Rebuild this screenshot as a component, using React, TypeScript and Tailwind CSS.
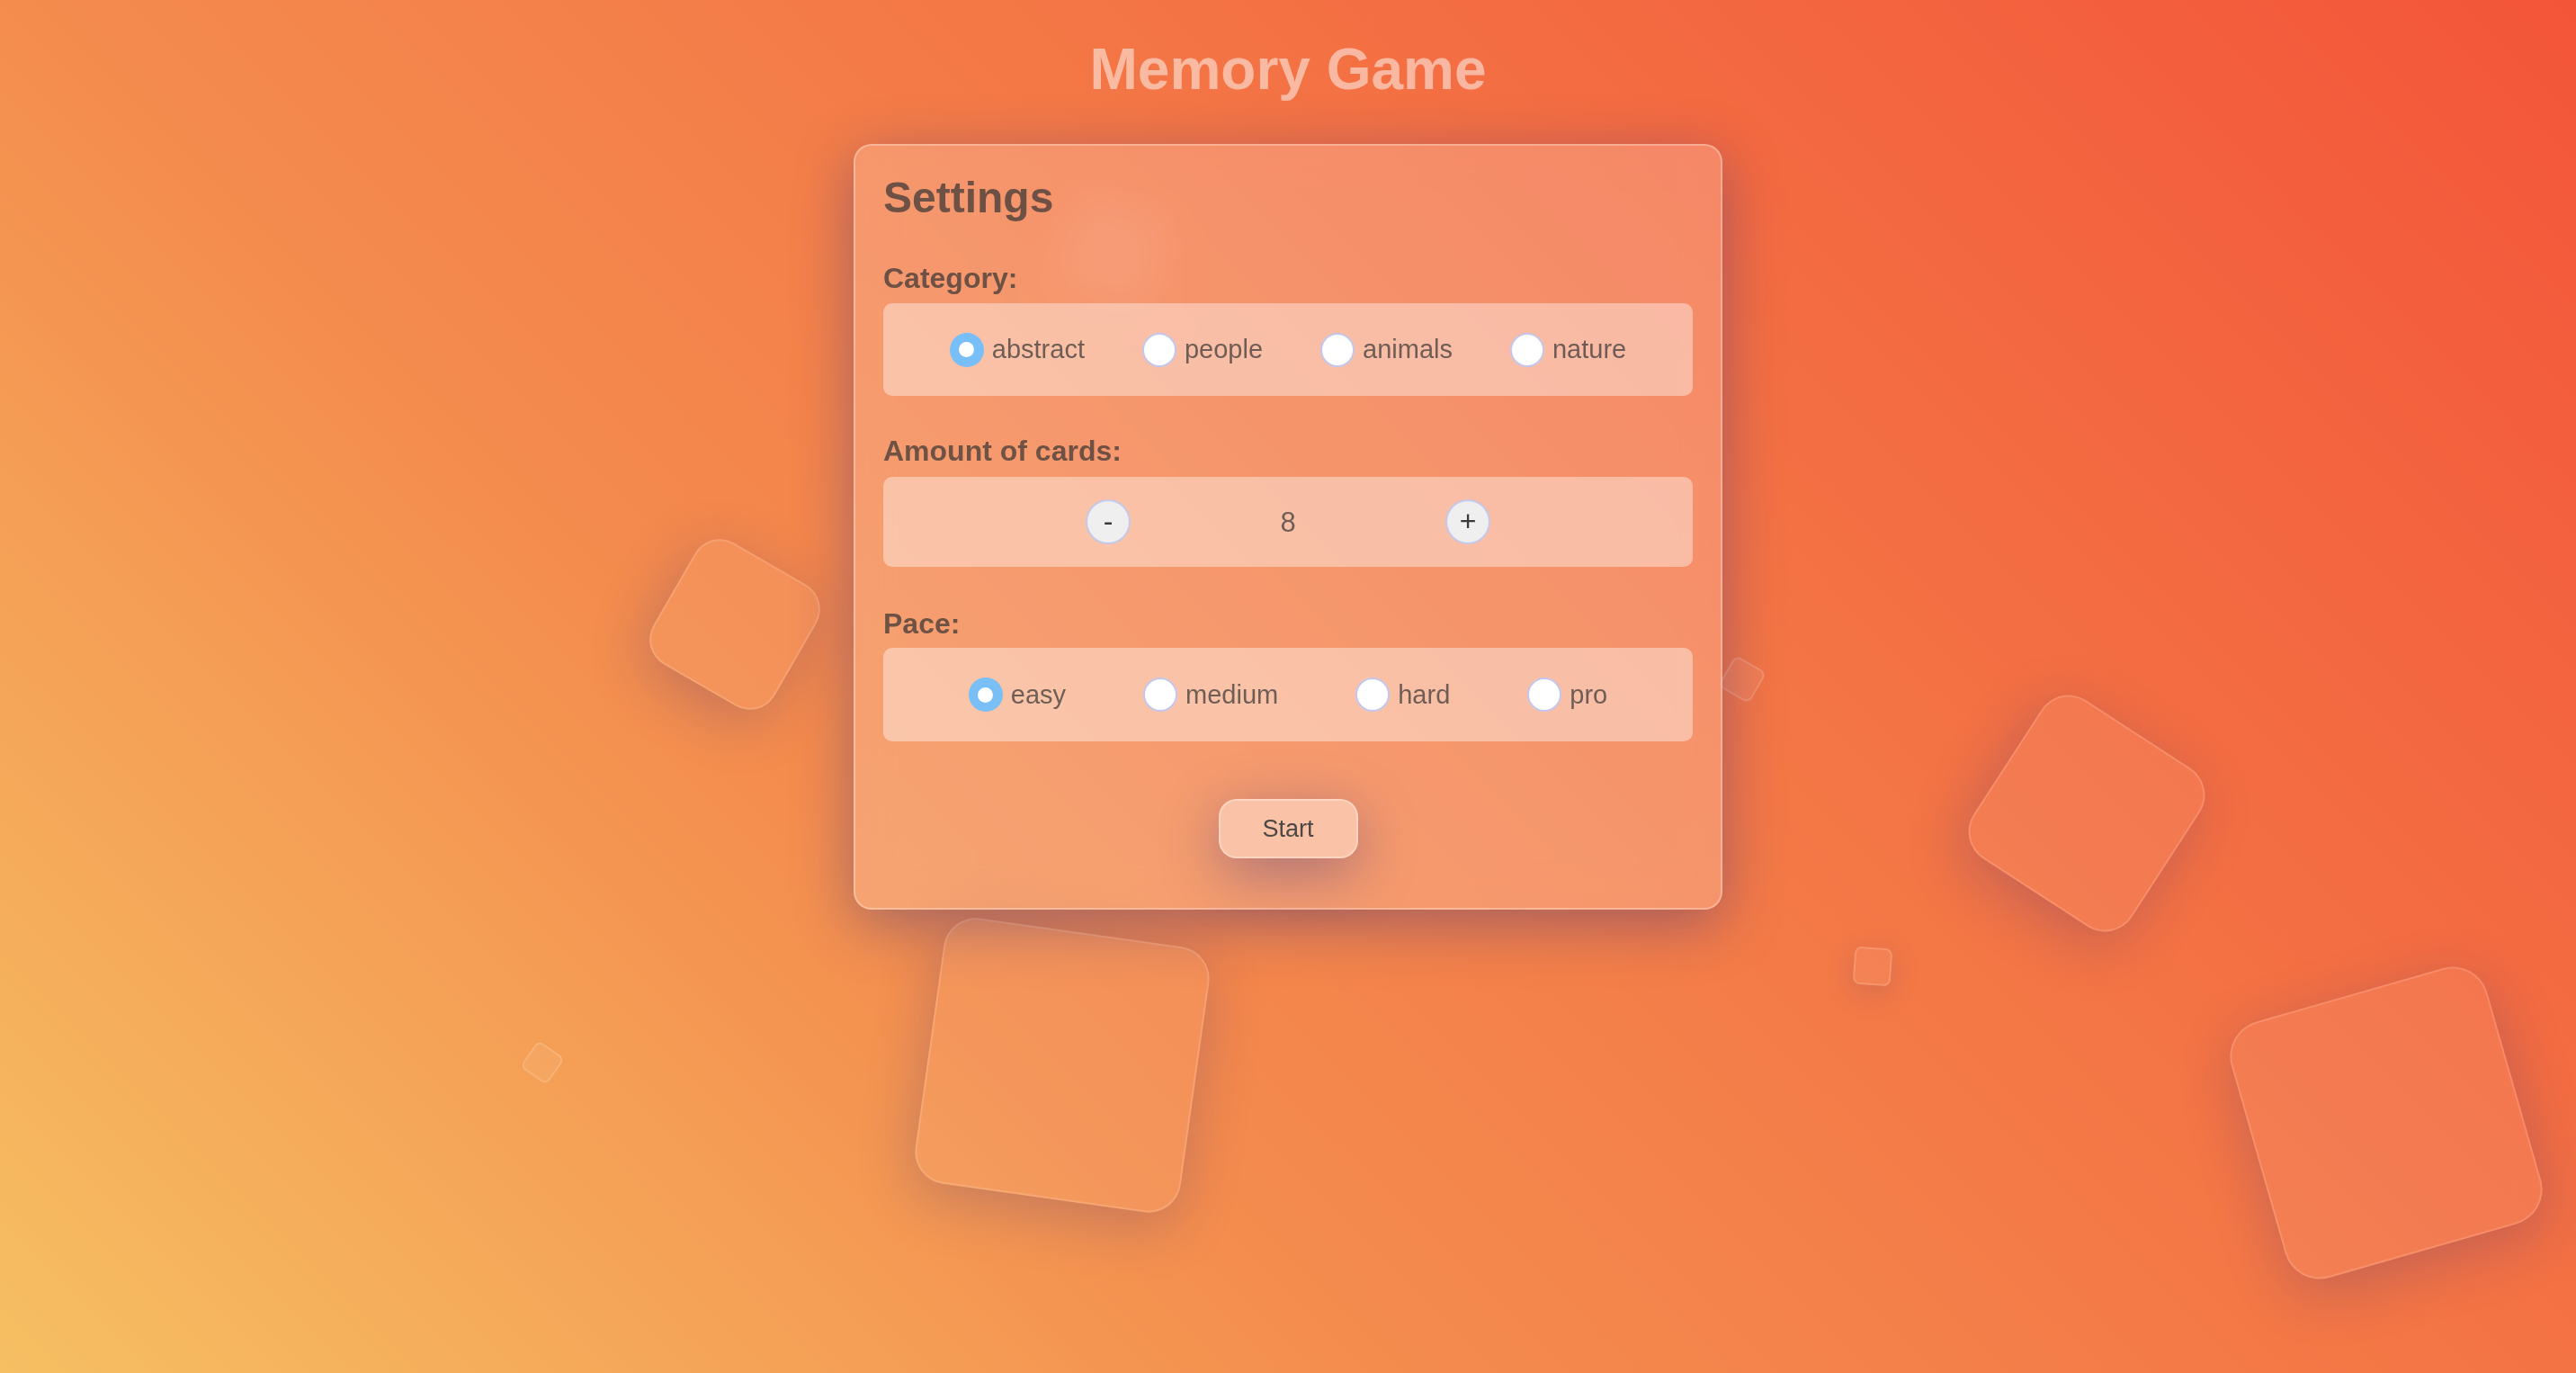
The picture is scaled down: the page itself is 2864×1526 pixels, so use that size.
import React, { useState } from 'react';

const categories = ['abstract', 'people', 'animals', 'nature'];
const paces = ['easy', 'medium', 'hard', 'pro'];

function Radio({ checked }: { checked: boolean }) {
  if (checked) {
    return (
      <span className="flex h-[38px] w-[38px] shrink-0 items-center justify-center rounded-full bg-[#78bef7]">
        <span className="h-[17px] w-[17px] rounded-full bg-white" />
      </span>
    );
  }
  return <span className="h-[38px] w-[38px] shrink-0 rounded-full border-2 border-[#c3c7ec] bg-white" />;
}

interface OptionGroupProps {
  options: string[];
  value: string;
  onChange: (v: string) => void;
  gap: string;
}

function OptionGroup({ options, value, onChange, gap }: OptionGroupProps) {
  return (
    <div className={`flex h-full items-center justify-center ${gap}`}>
      {options.map((opt) => (
        <label key={opt} className="flex cursor-pointer items-center gap-[9px]" onClick={() => onChange(opt)}>
          <Radio checked={value === opt} />
          <span className="text-[29px] leading-none text-[#333333]/70">{opt}</span>
        </label>
      ))}
    </div>
  );
}

export default function App() {
  const [category, setCategory] = useState('abstract');
  const [pace, setPace] = useState('easy');
  const [amount, setAmount] = useState(8);

  return (
    <div className="relative min-h-screen w-full overflow-hidden bg-[linear-gradient(45deg,#f6bf62_0%,#f48c4e_35%,#f35539_100%)] font-['Liberation_Sans',Arial,sans-serif]">
      {/* floating glass cards in the background */}
      <div className="absolute left-[739px] top-[616px] h-[156px] w-[156px] rotate-[30deg] rounded-[32px] border-2 border-white/15 bg-white/[0.07] shadow-[0_16px_64px_rgba(31,38,135,0.22)]" />
      <div className="absolute left-[1190px] top-[228px] h-[100px] w-[100px] rotate-[15deg] rounded-[20px] border-2 border-white/15 bg-white/[0.07]" />
      <div className="absolute left-[1917px] top-[735px] h-[40px] w-[40px] rotate-[30deg] rounded-[8px] border-2 border-white/15 bg-white/[0.07]" />
      <div className="absolute left-[2215px] top-[799px] h-[210px] w-[210px] rotate-[33deg] rounded-[36px] border-2 border-white/15 bg-white/[0.07] shadow-[0_16px_64px_rgba(31,38,135,0.22)]" />
      <div className="absolute left-[2061px] top-[1053px] h-[42px] w-[42px] rotate-[4deg] rounded-[8px] border-2 border-white/15 bg-white/[0.07] shadow-[0_8px_32px_rgba(31,38,135,0.15)]" />
      <div className="absolute left-[585px] top-[1163px] h-[36px] w-[36px] rotate-[35deg] rounded-[7px] border-2 border-white/15 bg-white/[0.07]" />
      <div className="absolute left-[1032px] top-[1035px] h-[298px] w-[298px] rotate-[8deg] rounded-[36px] border-2 border-white/15 bg-white/[0.07] shadow-[0_16px_64px_rgba(31,38,135,0.22)]" />
      <div className="absolute left-[2505px] top-[1100px] h-[296px] w-[296px] -rotate-[16deg] rounded-[40px] border-2 border-white/15 bg-white/[0.07] shadow-[0_16px_64px_rgba(31,38,135,0.22)]" />

      <div className="relative flex flex-col items-center pt-[39px]">
        <h1 className="text-[64px] font-bold leading-[77px] text-white/50">Memory Game</h1>

        <div className="mt-[44px] flex w-[966px] flex-col rounded-[20px] border-2 border-white/30 bg-white/20 px-[31px] pb-[55px] pt-[29px] shadow-[0_16px_64px_rgba(31,38,135,0.37)] backdrop-blur-[20px]">
          <h2 className="text-[48px] font-bold leading-[58px] text-[#333333]/70">Settings</h2>

          <div className="mt-[41px] text-[32px] font-bold leading-[38px] text-[#333333]/70">Category:</div>
          <div className="mt-[9px] h-[103px] rounded-[10px] bg-white/40">
            <OptionGroup options={categories} value={category} onChange={setCategory} gap="gap-[64px]" />
          </div>

          <div className="mt-[42px] text-[32px] font-bold leading-[38px] text-[#333333]/70">Amount of cards:</div>
          <div className="mt-[10px] flex h-[100px] items-center justify-center gap-[162px] rounded-[10px] bg-white/40">
            <button
              onClick={() => setAmount(Math.max(2, amount - 2))}
              className="flex h-[50px] w-[50px] items-center justify-center rounded-full border-2 border-[#c5c8ea] bg-[#efefef] pb-[2px] text-[32px] leading-none text-[#3a3a3a]"
            >
              -
            </button>
            <span className="w-[26px] text-center text-[31px] leading-none text-[#333333]/70">{amount}</span>
            <button
              onClick={() => setAmount(amount + 2)}
              className="flex h-[50px] w-[50px] items-center justify-center rounded-full border-2 border-[#c5c8ea] bg-[#efefef] pb-[2px] text-[32px] leading-none text-[#3a3a3a]"
            >
              +
            </button>
          </div>

          <div className="mt-[44px] text-[32px] font-bold leading-[38px] text-[#333333]/70">Pace:</div>
          <div className="mt-[8px] h-[104px] rounded-[10px] bg-white/40">
            <OptionGroup options={paces} value={pace} onChange={setPace} gap="gap-[86px]" />
          </div>

          <div className="mt-[64px] flex justify-center">
            <button className="h-[66px] w-[155px] rounded-[20px] border-2 border-white/30 bg-white/40 text-[27px] text-[#4a4745] shadow-[0_16px_64px_rgba(31,38,135,0.37)]">
              Start
            </button>
          </div>
        </div>
      </div>
    </div>
  );
}
